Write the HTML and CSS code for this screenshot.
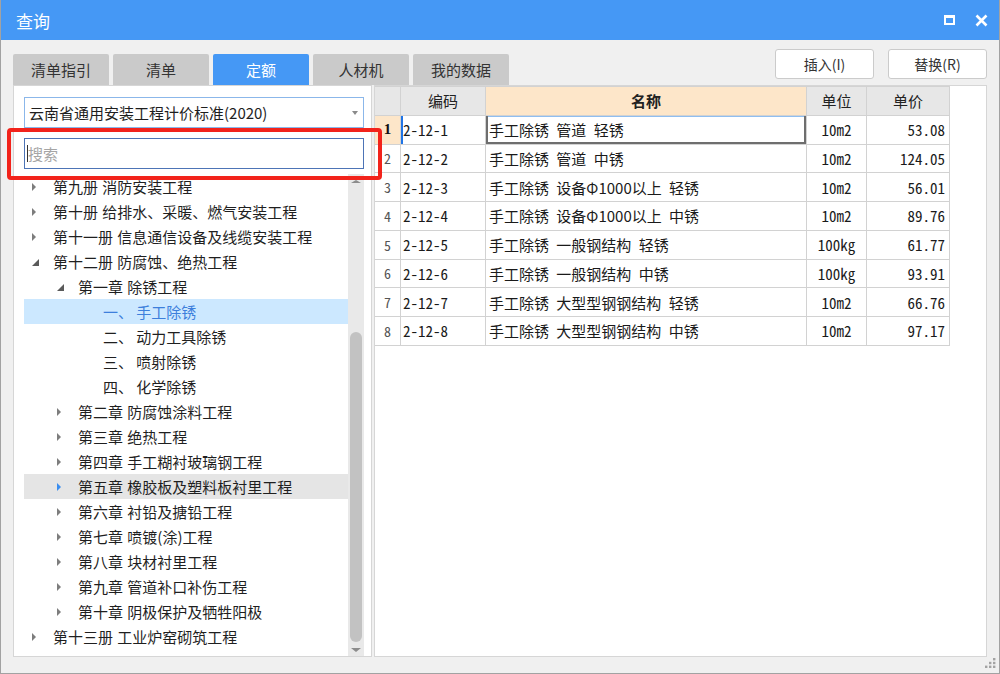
FILE: index.html
```html
<!DOCTYPE html>
<html lang="zh-CN">
<head>
<meta charset="utf-8">
<title>查询</title>
<link rel="stylesheet" href="styles.css">
</head>
<body>
<div class="window">
  <header class="titlebar">
    <span class="title">查询</span>
    <div class="title-controls">
      <span class="ctl-max"></span>
      <svg class="ctl-close" viewBox="0 0 13 13" width="13" height="13"><path d="M1.5 1.5 L11.5 11.5 M11.5 1.5 L1.5 11.5" stroke="#fff" stroke-width="2.6" fill="none"/></svg>
    </div>
  </header>

  <div class="toolbar">
    <nav class="tabs">
      <div class="tab">清单指引</div>
      <div class="tab">清单</div>
      <div class="tab active">定额</div>
      <div class="tab">人材机</div>
      <div class="tab">我的数据</div>
    </nav>
    <div class="actions">
      <button class="btn">插入(I)</button>
      <button class="btn">替换(R)</button>
    </div>
  </div>

  <div class="main">
    <section class="left-panel">
      <div class="select"><span>云南省通用安装工程计价标准(2020)</span><span class="select-arrow"></span></div>
      <div class="search"><span class="caret"></span><span class="placeholder">搜索</span></div>
      <div class="tree-wrap">
        <ul class="tree">
          <li class="node l1"><span class="tw"><i class="arr-r"></i></span>第九册 消防安装工程</li>
          <li class="node l1"><span class="tw"><i class="arr-r"></i></span>第十册 给排水、采暖、燃气安装工程</li>
          <li class="node l1"><span class="tw"><i class="arr-r"></i></span>第十一册 信息通信设备及线缆安装工程</li>
          <li class="node l1"><span class="tw"><i class="arr-d"></i></span>第十二册 防腐蚀、绝热工程</li>
          <li class="node l2"><span class="tw"><i class="arr-d"></i></span>第一章 除锈工程</li>
          <li class="node l3 selected"><span class="tw"></span>一、 手工除锈</li>
          <li class="node l3"><span class="tw"></span>二、 动力工具除锈</li>
          <li class="node l3"><span class="tw"></span>三、 喷射除锈</li>
          <li class="node l3"><span class="tw"></span>四、 化学除锈</li>
          <li class="node l2"><span class="tw"><i class="arr-r"></i></span>第二章 防腐蚀涂料工程</li>
          <li class="node l2"><span class="tw"><i class="arr-r"></i></span>第三章 绝热工程</li>
          <li class="node l2"><span class="tw"><i class="arr-r"></i></span>第四章 手工糊衬玻璃钢工程</li>
          <li class="node l2 hover"><span class="tw"><i class="arr-r"></i></span>第五章 橡胶板及塑料板衬里工程</li>
          <li class="node l2"><span class="tw"><i class="arr-r"></i></span>第六章 衬铅及搪铅工程</li>
          <li class="node l2"><span class="tw"><i class="arr-r"></i></span>第七章 喷镀(涂)工程</li>
          <li class="node l2"><span class="tw"><i class="arr-r"></i></span>第八章 块材衬里工程</li>
          <li class="node l2"><span class="tw"><i class="arr-r"></i></span>第九章 管道补口补伤工程</li>
          <li class="node l2"><span class="tw"><i class="arr-r"></i></span>第十章 阴极保护及牺牲阳极</li>
          <li class="node l1"><span class="tw"><i class="arr-r"></i></span>第十三册 工业炉窑砌筑工程</li>
        </ul>
        <div class="vscroll">
          <span class="sb-up"></span>
          <span class="sb-thumb"></span>
          <span class="sb-down"></span>
        </div>
      </div>
    </section>

    <section class="right-panel">
      <div class="grid">
        <div class="c hd"></div><div class="c hd">编码</div><div class="c hd sel">名称</div><div class="c hd">单位</div><div class="c hd">单价</div>

        <div class="c rn cur">1</div><div class="c code curcode">2-12-1</div><div class="c name focus">手工除锈 管道 轻锈</div><div class="c unit">10m2</div><div class="c price">53.08</div>
        <div class="c rn">2</div><div class="c code">2-12-2</div><div class="c name">手工除锈 管道 中锈</div><div class="c unit">10m2</div><div class="c price">124.05</div>
        <div class="c rn">3</div><div class="c code">2-12-3</div><div class="c name">手工除锈 设备Φ1000以上 轻锈</div><div class="c unit">10m2</div><div class="c price">56.01</div>
        <div class="c rn">4</div><div class="c code">2-12-4</div><div class="c name">手工除锈 设备Φ1000以上 中锈</div><div class="c unit">10m2</div><div class="c price">89.76</div>
        <div class="c rn">5</div><div class="c code">2-12-5</div><div class="c name">手工除锈 一般钢结构 轻锈</div><div class="c unit">100kg</div><div class="c price">61.77</div>
        <div class="c rn">6</div><div class="c code">2-12-6</div><div class="c name">手工除锈 一般钢结构 中锈</div><div class="c unit">100kg</div><div class="c price">93.91</div>
        <div class="c rn">7</div><div class="c code">2-12-7</div><div class="c name">手工除锈 大型型钢钢结构 轻锈</div><div class="c unit">10m2</div><div class="c price">66.76</div>
        <div class="c rn">8</div><div class="c code">2-12-8</div><div class="c name">手工除锈 大型型钢钢结构 中锈</div><div class="c unit">10m2</div><div class="c price">97.17</div>
      </div>
    </section>
  </div>

  <footer class="statusbar">
    <svg class="grip" viewBox="0 0 11 10" width="11" height="10">
      <rect x="8" y="0" width="2.4" height="2.4" fill="#a3a3a3"/>
      <rect x="4" y="3.8" width="2.4" height="2.4" fill="#a3a3a3"/>
      <rect x="8" y="3.8" width="2.4" height="2.4" fill="#a3a3a3"/>
      <rect x="0" y="7.6" width="2.4" height="2.4" fill="#a3a3a3"/>
      <rect x="4" y="7.6" width="2.4" height="2.4" fill="#a3a3a3"/>
      <rect x="8" y="7.6" width="2.4" height="2.4" fill="#a3a3a3"/>
    </svg>
  </footer>

  <div class="highlight"></div>
</div>
</body>
</html>
```

FILE: styles.css
```css
* {
  box-sizing: border-box;
  margin: 0;
  padding: 0;
}

html, body {
  width: 1000px;
  height: 674px;
  overflow: hidden;
}

body {
  font-family: "Noto Sans CJK SC", "Noto Sans", sans-serif;
  font-size: 15px;
  color: #222;
  background: #f0f0f0;
}

.window {
  position: relative;
  width: 1000px;
  height: 674px;
  background: #f0f0f0;
  border: 1px solid #a2a2a2;
  border-top: none;
  display: flex;
  flex-direction: column;
}

/* title bar */
.titlebar {
  flex: none;
  height: 40px;
  background: #4598f5;
  color: #fff;
  display: flex;
  align-items: center;
  justify-content: space-between;
  padding: 0 11px 0 15px;
}

.title {
  font-size: 17px;
  line-height: 1;
}

.title-controls {
  display: flex;
  align-items: center;
  gap: 20px;
}

.ctl-max {
  display: block;
  width: 11px;
  height: 10px;
  border: 2px solid #fff;
  border-top-width: 3px;
}

.ctl-close {
  display: block;
}

/* toolbar with tabs */
.toolbar {
  flex: none;
  height: 45px;
  display: flex;
  justify-content: space-between;
  align-items: flex-end;
  padding: 0 12px;
}

.tabs {
  display: flex;
  gap: 4px;
}

.tab {
  width: 96px;
  height: 31px;
  background: #cacaca;
  border-radius: 2px 2px 0 0;
  display: flex;
  align-items: center;
  justify-content: center;
  color: #333;
  font-size: 15px;
}

.tab.active {
  background: #4598f5;
  color: #fff;
}

.actions {
  display: flex;
  gap: 14px;
  margin-bottom: 6px;
}

.btn {
  width: 99px;
  height: 30px;
  background: #fff;
  border: 1px solid #cbcbcb;
  border-radius: 3px;
  font-family: inherit;
  font-size: 14px;
  color: #333;
}

/* main area */
.main {
  flex: none;
  height: 572px;
  display: flex;
  gap: 2px;
  padding: 0 12px;
}

.left-panel {
  flex: none;
  width: 359px;
  background: #fff;
  border: 1px solid #d6d6d6;
  padding: 11px 7px 0 10px;
  display: flex;
  flex-direction: column;
}

.select {
  flex: none;
  height: 31px;
  border: 1px solid #8bb7ea;
  display: flex;
  align-items: center;
  justify-content: space-between;
  padding: 0 5px 0 4px;
  font-size: 15px;
  color: #1e1e1e;
}

.select-arrow {
  width: 0;
  height: 0;
  border-left: 3.5px solid transparent;
  border-right: 3.5px solid transparent;
  border-top: 4px solid #8a8a8a;
}

.search {
  flex: none;
  height: 31px;
  margin-top: 10px;
  border: 1px solid #4d74b6;
  display: flex;
  align-items: center;
  padding-left: 2px;
}

.caret {
  width: 1px;
  height: 17px;
  background: #333;
  margin-right: 0;
}

.placeholder {
  color: #a5a5a5;
  font-size: 15px;
}

.tree-wrap {
  flex: 1;
  margin-top: 5px;
  display: flex;
  min-height: 0;
}

.tree {
  flex: 1;
  list-style: none;
  overflow: hidden;
}

.node {
  height: 25px;
  display: flex;
  align-items: center;
  white-space: nowrap;
  font-size: 15px;
  color: #1f1f1f;
  word-spacing: 1px;
}

.node.l1 { padding-left: 8px; }
.node.l2 { padding-left: 33px; }
.node.l3 { padding-left: 58px; word-spacing: 0; }

.node.selected {
  background: #cce8ff;
  color: #3d7fdc;
}

.node.hover {
  background: #e5e5e5;
}

.tw {
  flex: none;
  width: 21px;
  height: 25px;
  display: flex;
  align-items: center;
}

.arr-r {
  display: block;
  width: 0;
  height: 0;
  border-top: 4px solid transparent;
  border-bottom: 4px solid transparent;
  border-left: 4.5px solid #7d7d7d;
}

.hover .arr-r {
  border-left-color: #3a8ef0;
}

.arr-d {
  display: block;
  width: 0;
  height: 0;
  margin-top: 2px;
  border-left: 7px solid transparent;
  border-bottom: 7px solid #5a5a5a;
}

.vscroll {
  flex: none;
  width: 16px;
  background: #e9e9e9;
  display: flex;
  flex-direction: column;
  align-items: center;
}

.sb-up {
  margin-top: 6px;
  width: 0;
  height: 0;
  border-left: 5px solid transparent;
  border-right: 5px solid transparent;
  border-bottom: 3px solid #8c8c8c;
}

.sb-thumb {
  margin-top: 149px;
  width: 12px;
  height: 310px;
  border-radius: 6px;
  background: #c2c2c2;
}

.sb-down {
  margin-top: 6px;
  width: 0;
  height: 0;
  border-left: 5px solid transparent;
  border-right: 5px solid transparent;
  border-top: 4px solid #8c8c8c;
}

/* right panel / grid */
.right-panel {
  flex: 1;
  background: #fff;
  border: 1px solid #d6d6d6;
}

.grid {
  display: grid;
  grid-template-columns: 26px 85px 321px 60px 83px;
  grid-auto-rows: 28.75px;
  width: 575px;
  border-top: 1px solid #d2d2d2;
}

.c {
  border-right: 1px solid #d2d2d2;
  border-bottom: 1px solid #d2d2d2;
  display: flex;
  align-items: center;
  white-space: nowrap;
  overflow: hidden;
  font-size: 15px;
  color: #1a1a1a;
}

.hd {
  background: #e7e7e7;
  justify-content: center;
  color: #222;
}

.hd.sel {
  background: #fde6c9;
  font-weight: bold;
}

.rn {
  justify-content: center;
  font-family: "Noto Sans Mono CJK SC", "Liberation Mono", monospace;
  font-size: 14px;
  color: #555;
}

.rn.cur {
  background: #fde6c9;
  color: #111;
  font-weight: bold;
  font-family: "Liberation Serif", serif;
  font-size: 15px;
}

.code, .unit, .price {
  font-family: "Noto Sans Mono CJK SC", "Liberation Mono", monospace;
  font-size: 15px;
}

.code {
  padding-left: 2px;
}

.curcode {
  box-shadow: inset 2px 0 #1f74e6;
}

.name {
  padding-left: 3px;
  word-spacing: 4px;
}

.focus {
  box-shadow: inset 2px 0 #6e6e6e, inset -2px 0 #6e6e6e, inset 0 -2px #6e6e6e, inset 0 1px #8fbef0;
}

.unit {
  justify-content: center;
}

.price {
  justify-content: flex-end;
  padding-right: 4px;
}

/* status bar */
.statusbar {
  flex: 1;
  display: flex;
  justify-content: flex-end;
  align-items: flex-start;
  padding: 1px 3px 0 0;
}

.grip {
  display: block;
}

/* red annotation box */
.highlight {
  position: absolute;
  left: 6px;
  top: 128px;
  width: 375px;
  height: 52px;
  border: 4px solid #f2231b;
  border-radius: 4px;
  pointer-events: none;
}
```
